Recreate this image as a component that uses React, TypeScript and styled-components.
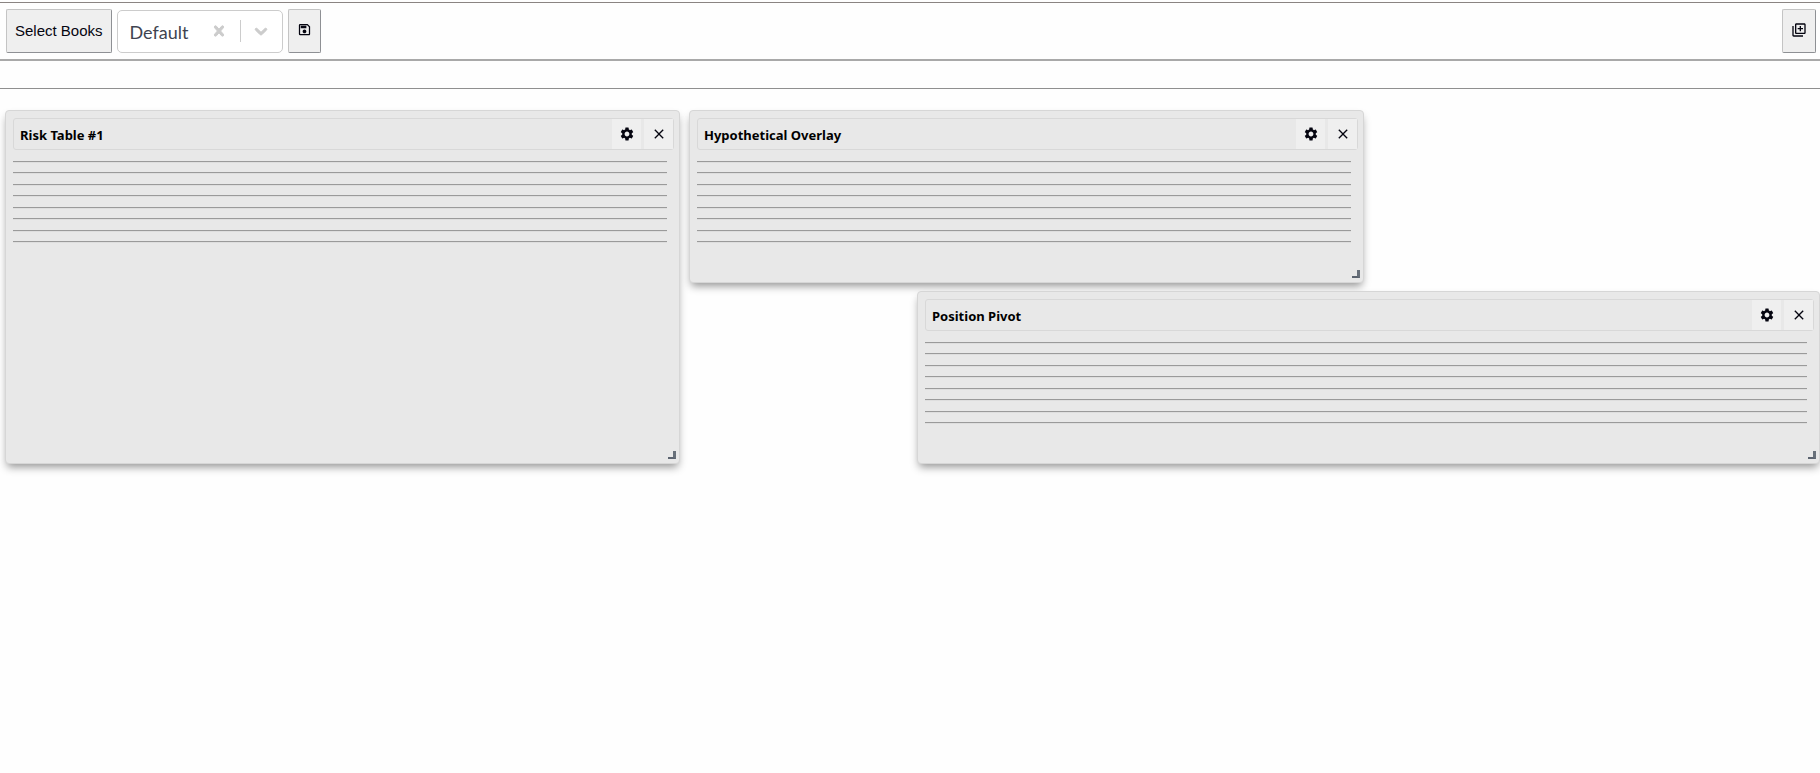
import React from "react";
import styled, { createGlobalStyle } from "styled-components";
import { MdClose, MdOutlineLibraryAdd, MdOutlineSave, MdSettings } from "react-icons/md";

const GlobalStyle = createGlobalStyle`
  *, *::before, *::after { box-sizing: border-box; }
  body {
    margin: 0;
    background: #fefefe;
    color: #000;
    font-family: "Noto Sans", "Open Sans", sans-serif;
  }
`;

const Page = styled.div`
  display: flex;
  flex-direction: column;
  padding-top: 2px;
`;

const Toolbar = styled.header`
  display: flex;
  align-items: center;
  gap: 5px;
  padding: 6px 4px 6px 6px;
  border-top: 1px solid #8a8482;
  border-bottom: 2px solid #a9a9a9;
`;

const ToolButton = styled.button<{ $push?: boolean; $icon?: boolean }>`
  display: flex;
  align-items: flex-start;
  justify-content: center;
  height: 44px;
  padding: ${(p) => (p.$icon ? "12px" : "13px")} 8px 0;
  margin-left: ${(p) => (p.$push ? "auto" : "0")};
  border: 1px solid;
  border-color: #c4c4c4 #8e9094 #8e9094 #c4c4c4;
  border-radius: 2px;
  background: #efefef;
  color: #050510;
  font: 15px/16px "Liberation Sans", Arial, sans-serif;
`;

const Combo = styled.div`
  display: flex;
  align-items: center;
  height: 43px;
  width: 166px;
  border: 1px solid #ccc;
  border-radius: 5px;
  background: #fff;
`;

const ComboSelect = styled.select`
  flex: 1;
  min-width: 0;
  height: 100%;
  padding: 1px 0 0 12px;
  border: 0;
  appearance: none;
  background: none;
  color: #404450;
  font: 18px/24px Lato, "Open Sans", sans-serif;
`;

const ComboButton = styled.button`
  display: flex;
  align-items: center;
  justify-content: center;
  width: 41px;
  height: 100%;
  padding: 0;
  border: 0;
  background: none;
  color: #ccc;
`;

const ComboIcon = styled.svg`
  fill: currentColor;
  stroke: currentColor;
  stroke-width: 1px;
`;

const ComboDivider = styled.span`
  width: 1px;
  height: 22px;
  background: #ccc;
`;

const SubBar = styled.div`
  height: 28px;
  border-bottom: 1px solid #8f8f8f;
`;

const Board = styled.main`
  display: grid;
  grid-template-columns: repeat(8, minmax(0, 1fr));
  grid-auto-rows: 173px;
  gap: 8px 9px;
  padding: 21px 0 21px 5px;
`;

const Panel = styled.section<{ $column: string; $row: string }>`
  grid-column: ${(p) => p.$column};
  grid-row: ${(p) => p.$row};
  display: flex;
  flex-direction: column;
  padding: 7px 5px 4px 7px;
  border: 1px solid #d6d6d6;
  border-radius: 4px;
  background: #e8e8e8;
  box-shadow: 0 5px 8px -2px rgba(0, 0, 0, 0.42);
`;

const PanelHeader = styled.header`
  display: flex;
  align-items: stretch;
  height: 32px;
  border: 1px solid #d8d8d8;
  border-radius: 3px;
`;

const PanelTitle = styled.h2`
  flex: 1;
  margin: 0;
  padding-left: 6px;
  font-size: 13px;
  line-height: 32px;
  font-weight: 700;
`;

const PanelButton = styled.button`
  display: flex;
  align-items: center;
  justify-content: center;
  width: 29px;
  margin-left: 3px;
  padding: 0;
  border: 0;
  background: #efefef;
  color: #050510;
`;

const Rules = styled.div`
  display: flex;
  flex-direction: column;
  justify-content: space-between;
  height: 82px;
  margin: 11px 7px 0 0;
`;

const Rule = styled.hr`
  width: 100%;
  margin: 0;
  border: 0;
  border-top: 1px solid #9a9a9a;
  border-bottom: 1px solid #dedede;
`;

const ResizeHandle = styled.span`
  align-self: flex-end;
  width: 8px;
  height: 8px;
  margin: auto -2px 0 0;
  border-right: 3px solid #68707a;
  border-bottom: 2px solid #5c6470;
`;

const panels = [
  { title: "Risk Table #1", column: "1 / span 3", row: "1 / span 2" },
  { title: "Hypothetical Overlay", column: "4 / span 3", row: "1" },
  { title: "Position Pivot", column: "5 / span 4", row: "2" },
];

export default function App() {
  return (
    <>
      <GlobalStyle />
      <Page>
        <Toolbar>
          <ToolButton type="button">Select Books</ToolButton>
          <Combo>
            <ComboSelect aria-label="Layout" defaultValue="Default">
              <option>Default</option>
            </ComboSelect>
            <ComboButton type="button" aria-label="Clear">
              <ComboIcon width="20" height="20" viewBox="0 0 20 20">
                <path d="M14.348 14.849c-0.469 0.469-1.229 0.469-1.697 0l-2.651-3.030-2.651 3.029c-0.469 0.469-1.229 0.469-1.697 0-0.469-0.469-0.469-1.229 0-1.697l2.758-3.15-2.759-3.152c-0.469-0.469-0.469-1.228 0-1.697s1.228-0.469 1.697 0l2.652 3.031 2.651-3.031c0.469-0.469 1.228-0.469 1.697 0s0.469 1.229 0 1.697l-2.758 3.152 2.758 3.15c0.469 0.469 0.469 1.229 0 1.698z" />
              </ComboIcon>
            </ComboButton>
            <ComboDivider />
            <ComboButton type="button" aria-label="Open list">
              <ComboIcon width="20" height="20" viewBox="0 0 20 20">
                <path d="M4.516 7.548c0.436-0.446 1.043-0.481 1.576 0l3.908 3.747 3.908-3.747c0.533-0.481 1.141-0.446 1.574 0 0.436 0.445 0.408 1.197 0 1.615-0.406 0.418-4.695 4.502-4.695 4.502-0.217 0.223-0.502 0.335-0.787 0.335s-0.57-0.112-0.789-0.335c0 0-4.287-4.084-4.695-4.502s-0.436-1.17 0-1.615z" />
              </ComboIcon>
            </ComboButton>
          </Combo>
          <ToolButton type="button" aria-label="Save layout" $icon>
            <MdOutlineSave size={15} />
          </ToolButton>
          <ToolButton type="button" aria-label="Add panel" $icon $push>
            <MdOutlineLibraryAdd size={16} />
          </ToolButton>
        </Toolbar>
        <SubBar />
        <Board>
          {panels.map((panel) => (
            <Panel key={panel.title} $column={panel.column} $row={panel.row}>
              <PanelHeader>
                <PanelTitle>{panel.title}</PanelTitle>
                <PanelButton type="button" aria-label={`${panel.title} settings`}>
                  <MdSettings size={16} />
                </PanelButton>
                <PanelButton type="button" aria-label={`Close ${panel.title}`}>
                  <MdClose size={16} />
                </PanelButton>
              </PanelHeader>
              <Rules>
                {Array.from({ length: 8 }, (_, i) => (
                  <Rule key={i} />
                ))}
              </Rules>
              <ResizeHandle />
            </Panel>
          ))}
        </Board>
      </Page>
    </>
  );
}
